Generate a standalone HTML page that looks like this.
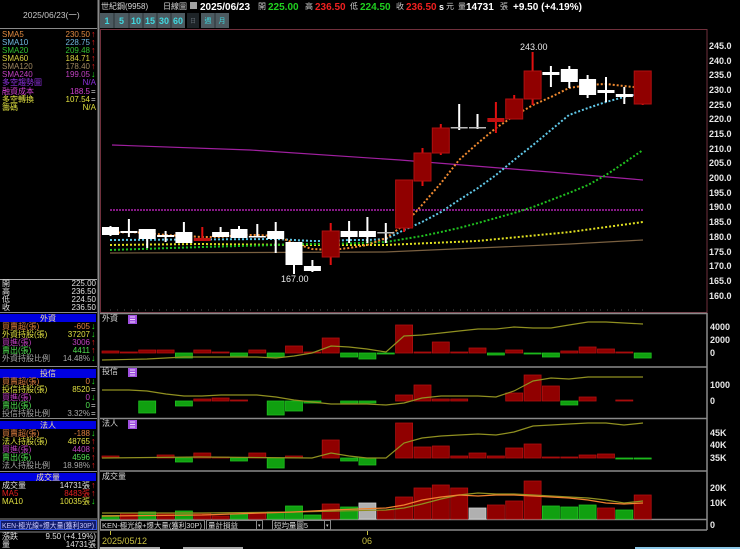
<!DOCTYPE html>
<html><head><meta charset="utf-8"><style>
html,body{margin:0;padding:0;background:#000;width:740px;height:549px;overflow:hidden}
svg{display:block}
text{font-family:"Liberation Sans","Noto Sans CJK TC",sans-serif;font-size:8px}
.b{font-weight:bold}
.ax{fill:#e8e8e8;font-size:9px;font-weight:bold}
.ar{font-size:9px;font-weight:bold}
</style></head><body>
<svg width="740" height="549" viewBox="0 0 740 549" xmlns="http://www.w3.org/2000/svg">
<rect width="740" height="549" fill="#000"/>
<line x1="98.5" y1="0" x2="98.5" y2="549" stroke="#8a8a8a" stroke-width="2"/>
<line x1="0" y1="28.5" x2="97" y2="28.5" stroke="#8a8a8a"/>
<text x="23" y="18" fill="#c8c8c8" style="font-size:8.5px">2025/06/23(一)</text>
<g>
<text x="2" y="37" fill="#e08a40">SMA5</text><text x="90" y="37" fill="#e08a40" text-anchor="end">230.50</text><text x="91" y="37" class="ar" fill="#f02020">↑</text>
<text x="2" y="45" fill="#70b8e0">SMA10</text><text x="90" y="45" fill="#70b8e0" text-anchor="end">228.75</text><text x="91" y="45" class="ar" fill="#f02020">↑</text>
<text x="2" y="53" fill="#30c030">SMA20</text><text x="90" y="53" fill="#30c030" text-anchor="end">209.48</text><text x="91" y="53" class="ar" fill="#f02020">↑</text>
<text x="2" y="61" fill="#d8d040">SMA60</text><text x="90" y="61" fill="#d8d040" text-anchor="end">184.71</text><text x="91" y="61" class="ar" fill="#f02020">↑</text>
<text x="2" y="69" fill="#a08860">SMA120</text><text x="90" y="69" fill="#a08860" text-anchor="end">178.40</text><text x="91" y="69" class="ar" fill="#f02020">↑</text>
<text x="2" y="77" fill="#c040c0">SMA240</text><text x="90" y="77" fill="#c040c0" text-anchor="end">199.05</text><text x="91" y="77" class="ar" fill="#20e020">↓</text>
<text x="2" y="85" fill="#9030e0">多空趨勢圖</text><text x="96" y="85" fill="#9030e0" text-anchor="end">N/A</text>
<text x="2" y="94" fill="#d040d0">融資成本</text><text x="90" y="94" fill="#d040d0" text-anchor="end">188.5</text><text x="91" y="94" fill="#ddd">=</text>
<text x="2" y="102" fill="#e0e040">多空轉換</text><text x="90" y="102" fill="#e0e040" text-anchor="end">107.54</text><text x="91" y="102" fill="#ddd">=</text>
<text x="2" y="110" fill="#e0e040">籌碼</text><text x="96" y="110" fill="#e0e040" text-anchor="end">N/A</text>
</g>
<line x1="0" y1="279.5" x2="97" y2="279.5" stroke="#aaa"/>
<g fill="#e0e0e0">
<text x="2" y="286">開</text><text x="96" y="286" text-anchor="end">225.00</text>
<text x="2" y="294">高</text><text x="96" y="294" text-anchor="end">236.50</text>
<text x="2" y="302">低</text><text x="96" y="302" text-anchor="end">224.50</text>
<text x="2" y="310">收</text><text x="96" y="310" text-anchor="end">236.50</text>
</g>
<line x1="0" y1="312.5" x2="97" y2="312.5" stroke="#8a8a8a"/>
<rect x="0" y="314" width="96" height="8" fill="#0000e0"/><text x="48" y="321" fill="#f0e0a0" text-anchor="middle">外資</text>
<text x="2" y="329" fill="#e08040">買賣超(張)</text><text x="90" y="329" fill="#e08040" text-anchor="end">-605</text><text x="91" y="329" class="ar" fill="#20e020">↓</text>
<text x="2" y="337" fill="#e0e040">外資持股(張)</text><text x="90" y="337" fill="#e0e040" text-anchor="end">37207</text><text x="91" y="337" class="ar" fill="#20e020">↓</text>
<text x="2" y="345" fill="#c040c0">買進(張)</text><text x="90" y="345" fill="#c040c0" text-anchor="end">3006</text><text x="91" y="345" class="ar" fill="#f02020">↑</text>
<text x="2" y="353" fill="#50e050">賣出(張)</text><text x="90" y="353" fill="#50e050" text-anchor="end">4411</text><text x="91" y="353" class="ar" fill="#f02020">↑</text>
<text x="2" y="361" fill="#a8a8a8">外資持股比例</text><text x="90" y="361" fill="#a8a8a8" text-anchor="end">14.48%</text><text x="91" y="361" class="ar" fill="#20e020">↓</text>
<line x1="0" y1="366.5" x2="97" y2="366.5" stroke="#8a8a8a"/>
<rect x="0" y="369" width="96" height="9" fill="#0000e0"/><text x="48" y="376" fill="#f0e0a0" text-anchor="middle">投信</text>
<text x="2" y="384" fill="#e08040">買賣超(張)</text><text x="90" y="384" fill="#e08040" text-anchor="end">0</text><text x="91" y="384" class="ar" fill="#20e020">↓</text>
<text x="2" y="392" fill="#e0e040">投信持股(張)</text><text x="90" y="392" fill="#e0e040" text-anchor="end">8520</text><text x="91" y="392" fill="#ddd">=</text>
<text x="2" y="400" fill="#c040c0">買進(張)</text><text x="90" y="400" fill="#c040c0" text-anchor="end">0</text><text x="91" y="400" class="ar" fill="#20e020">↓</text>
<text x="2" y="408" fill="#50e050">賣出(張)</text><text x="90" y="408" fill="#50e050" text-anchor="end">0</text><text x="91" y="408" fill="#ddd">=</text>
<text x="2" y="416" fill="#a8a8a8">投信持股比例</text><text x="90" y="416" fill="#a8a8a8" text-anchor="end">3.32%</text><text x="91" y="416" fill="#ddd">=</text>
<line x1="0" y1="418.5" x2="97" y2="418.5" stroke="#8a8a8a"/>
<rect x="0" y="421" width="96" height="8" fill="#0000e0"/><text x="48" y="428" fill="#f0e0a0" text-anchor="middle">法人</text>
<text x="2" y="436" fill="#e08040">買賣超(張)</text><text x="90" y="436" fill="#e08040" text-anchor="end">-188</text><text x="91" y="436" class="ar" fill="#20e020">↓</text>
<text x="2" y="444" fill="#e0e040">法人持股(張)</text><text x="90" y="444" fill="#e0e040" text-anchor="end">48765</text><text x="91" y="444" class="ar" fill="#f02020">↑</text>
<text x="2" y="452" fill="#c040c0">買進(張)</text><text x="90" y="452" fill="#c040c0" text-anchor="end">4408</text><text x="91" y="452" class="ar" fill="#f02020">↑</text>
<text x="2" y="460" fill="#50e050">賣出(張)</text><text x="90" y="460" fill="#50e050" text-anchor="end">4596</text><text x="91" y="460" class="ar" fill="#f02020">↑</text>
<text x="2" y="468" fill="#a8a8a8">法人持股比例</text><text x="90" y="468" fill="#a8a8a8" text-anchor="end">18.98%</text><text x="91" y="468" class="ar" fill="#f02020">↑</text>
<line x1="0" y1="471.5" x2="97" y2="471.5" stroke="#8a8a8a"/>
<rect x="0" y="473" width="96" height="8" fill="#0000e0"/><text x="48" y="480" fill="#f0e0a0" text-anchor="middle">成交量</text>
<text x="2" y="488" fill="#e0e0e0">成交量</text><text x="90" y="488" fill="#e0e0e0" text-anchor="end">14731張</text><text x="91" y="488" class="ar" fill="#f02020">↑</text>
<text x="2" y="496" fill="#e02020">MA5</text><text x="90" y="496" fill="#e02020" text-anchor="end">8483張</text><text x="91" y="496" class="ar" fill="#f02020">↑</text>
<text x="2" y="504" fill="#e0e040">MA10</text><text x="90" y="504" fill="#e0e040" text-anchor="end">10035張</text><text x="91" y="504" class="ar" fill="#20e020">↓</text>
<line x1="0" y1="519" x2="97" y2="519" stroke="#8a8a8a"/>
<rect x="0.5" y="520.5" width="96" height="9" fill="#101a6a" stroke="#3050e0"/>
<text x="2" y="528" fill="#c8c8ff" textLength="92" lengthAdjust="spacingAndGlyphs" style="font-size:7.5px">KEN-極光線+爆大量(獲利30P)</text>
<line x1="0" y1="532" x2="97" y2="532" stroke="#8a8a8a"/>
<text x="2" y="539" fill="#e0e0e0">漲跌</text><text x="96" y="539" fill="#e0e0e0" text-anchor="end">9.50 (+4.19%)</text>
<text x="2" y="547" fill="#e0e0e0">量</text><text x="96" y="547" fill="#e0e0e0" text-anchor="end">14731張</text>

<text x="101" y="9" fill="#d8d8d8">世紀鋼(9958)</text>
<text x="163" y="9" fill="#d8d8d8">日線圖</text>
<rect x="190" y="2" width="7" height="7" fill="#a0a0a0"/>
<text x="200" y="10" fill="#fff" class="b" style="font-size:10px">2025/06/23</text>
<text x="258" y="9" fill="#ccc">開</text><text x="268" y="10" fill="#20d020" class="b" style="font-size:10px">225.00</text>
<text x="305" y="9" fill="#ccc">高</text><text x="315" y="10" fill="#f02020" class="b" style="font-size:10px">236.50</text>
<text x="350" y="9" fill="#ccc">低</text><text x="360" y="10" fill="#20d020" class="b" style="font-size:10px">224.50</text>
<text x="396" y="9" fill="#ccc">收</text><text x="406" y="10" fill="#f02020" class="b" style="font-size:10px">236.50</text>
<text x="439" y="10" fill="#fff" class="b" style="font-size:9px">s</text><text x="446" y="9" fill="#ccc">元</text>
<text x="458" y="9" fill="#ccc">量</text><text x="466" y="10" fill="#fff" class="b" style="font-size:10px">14731</text>
<text x="500" y="9" fill="#ccc">張</text>
<text x="513" y="10" fill="#fff" class="b" style="font-size:10px">+9.50 (+4.19%)</text>
<g>
<rect x="100" y="13" width="85" height="15" fill="#4c5a60"/>
<g stroke="#2a3236"><line x1="114" y1="13" x2="114" y2="28"/><line x1="129" y1="13" x2="129" y2="28"/><line x1="143" y1="13" x2="143" y2="28"/><line x1="157" y1="13" x2="157" y2="28"/><line x1="171" y1="13" x2="171" y2="28"/></g>
<rect x="187" y="13" width="12" height="15" fill="#1e2428"/>
<rect x="201" y="13" width="28" height="15" fill="#4c5a60"/><line x1="215" y1="13" x2="215" y2="28" stroke="#2a3236"/>
<g fill="#40d8e0" class="b" text-anchor="middle">
<text x="107" y="24" style="font-size:9px">1</text><text x="121.5" y="24" style="font-size:9px">5</text><text x="136" y="24" style="font-size:9px">10</text><text x="150" y="24" style="font-size:9px">15</text><text x="164" y="24" style="font-size:9px">30</text><text x="178" y="24" style="font-size:9px">60</text>
</g>
<text x="193" y="23" fill="#606870" text-anchor="middle" style="font-size:6px">日</text>
<text x="208" y="23" fill="#40d8e0" text-anchor="middle" style="font-size:7px">週</text>
<text x="222" y="23" fill="#40d8e0" text-anchor="middle" style="font-size:7px">月</text>
</g>

<rect x="100.5" y="29.5" width="606.5" height="283" fill="none" stroke="#70303c"/>
<g class="ax">
<text x="709" y="49" class="ax">245.0</text><text x="709" y="64" class="ax">240.0</text><text x="709" y="78" class="ax">235.0</text><text x="709" y="93" class="ax">230.0</text><text x="709" y="108" class="ax">225.0</text><text x="709" y="122" class="ax">220.0</text><text x="709" y="137" class="ax">215.0</text><text x="709" y="152" class="ax">210.0</text><text x="709" y="166" class="ax">205.0</text><text x="709" y="181" class="ax">200.0</text><text x="709" y="196" class="ax">195.0</text><text x="709" y="210" class="ax">190.0</text><text x="709" y="225" class="ax">185.0</text><text x="709" y="240" class="ax">180.0</text><text x="709" y="255" class="ax">175.0</text><text x="709" y="269" class="ax">170.0</text><text x="709" y="284" class="ax">165.0</text><text x="709" y="299" class="ax">160.0</text>
</g>
<line x1="110" y1="210" x2="643" y2="210" stroke="#b020b0" stroke-width="1.5" stroke-dasharray="2,1"/>
<polyline fill="none" stroke="#a020a0" stroke-width="1.2" points="112,145 250,150 400,160 550,172 643,180"/>
<polyline fill="none" stroke="#7a6040" stroke-width="1.2" points="110,253 385,252 477,248 570,244 643,240"/>
<polyline fill="none" stroke="#e0e020" stroke-width="2" stroke-dasharray="2,2" points="110,245 200,244 300,245 385,245 477,241 570,232 643,222"/>
<polyline fill="none" stroke="#20c020" stroke-width="2" stroke-dasharray="2,2" points="110,250 202,247 276,245 294,244 331,244 386,242 404,239 422,236 441,232 459,228 478,223 496,218 514,213 533,207 551,200 569,193 588,185 606,175 624,163 643,150"/>
<polyline fill="none" stroke="#60c8e8" stroke-width="2" stroke-dasharray="2,2" points="110,240 276,239 294,240 312,241 331,241 349,240 367,240 386,239 404,230 422,222 441,212 459,200 478,188 496,175 514,160 533,145 551,130 569,115 588,108 606,102 624,97 643,93"/>
<polyline fill="none" stroke="#f08a30" stroke-width="2" stroke-dasharray="2,2" points="110,233 129,232 147,233 166,235 184,236 202,237 221,237 239,235 257,235 276,236 294,243 312,249 331,250 349,248 367,245 386,238 404,225 422,205 441,183 459,160 478,143 496,128 514,116 533,105 551,97 569,88 588,85 606,84 624,86 643,88"/>
<g fill="#fff" stroke="#fff">
<line x1="110.5" y1="226" x2="110.5" y2="236" stroke-width="2"/><rect x="102" y="227" width="17" height="8" stroke="none"/>
<line x1="128.9" y1="219" x2="128.9" y2="237" stroke-width="2"/><rect x="120.4" y="231" width="17" height="2" stroke="none"/>
<line x1="147.2" y1="229" x2="147.2" y2="248" stroke-width="2"/><rect x="138.7" y="229" width="17" height="10" stroke="none"/>
<line x1="165.6" y1="231" x2="165.6" y2="242" stroke-width="2"/><rect x="157.1" y="235" width="17" height="2" stroke="none"/>
<line x1="183.9" y1="222" x2="183.9" y2="243" stroke-width="2"/><rect x="175.4" y="232" width="17" height="11" stroke="none"/>
<line x1="220.6" y1="227" x2="220.6" y2="237" stroke-width="2"/><rect x="212.1" y="232" width="17" height="5" stroke="none"/>
<line x1="239" y1="226" x2="239" y2="238" stroke-width="2"/><rect x="230.5" y="229" width="17" height="9" stroke="none"/>
<line x1="257.3" y1="224" x2="257.3" y2="237" stroke-width="2"/><rect x="248.8" y="236" width="17" height="1.5" stroke="none"/>
<line x1="275.7" y1="222" x2="275.7" y2="253" stroke-width="2"/><rect x="267.2" y="231" width="17" height="8" stroke="none"/>
<line x1="294" y1="242" x2="294" y2="274" stroke-width="2"/><rect x="285.5" y="242" width="17" height="23" stroke="none"/>
<line x1="312.4" y1="260" x2="312.4" y2="272" stroke-width="2"/><rect x="303.9" y="266" width="17" height="5" stroke="none"/>
<line x1="349.1" y1="221" x2="349.1" y2="243" stroke-width="2"/><rect x="340.6" y="231" width="17" height="6" stroke="none"/>
<line x1="367.4" y1="217" x2="367.4" y2="243" stroke-width="2"/><rect x="358.9" y="231" width="17" height="6" stroke="none"/>
<line x1="385.8" y1="223" x2="385.8" y2="243" stroke-width="2"/><rect x="377.3" y="232" width="17" height="1.5" stroke="none" fill="#bbb"/>
<line x1="459.2" y1="104" x2="459.2" y2="130" stroke-width="2"/><rect x="450.7" y="127" width="17" height="1.5" stroke="none" fill="#bbb"/>
<line x1="477.5" y1="114" x2="477.5" y2="129" stroke-width="2"/><rect x="469" y="127" width="17" height="1.5" stroke="none" fill="#bbb"/>
<line x1="550.9" y1="66" x2="550.9" y2="87" stroke-width="2"/><rect x="542.4" y="72" width="17" height="3" stroke="none"/>
<line x1="569.3" y1="66" x2="569.3" y2="88" stroke-width="2"/><rect x="560.8" y="69" width="17" height="13" stroke="none"/>
<line x1="587.6" y1="75" x2="587.6" y2="98" stroke-width="2"/><rect x="579.1" y="79" width="17" height="16" stroke="none"/>
<line x1="606" y1="77" x2="606" y2="102" stroke-width="2"/><rect x="597.5" y="90" width="17" height="3" stroke="none"/>
<line x1="624.3" y1="87" x2="624.3" y2="104" stroke-width="2"/><rect x="615.8" y="94" width="17" height="3" stroke="none"/>
</g>
<g>
<line x1="202.3" y1="227" x2="202.3" y2="241" stroke="#e01010" stroke-width="2"/><rect x="193.8" y="238" width="17" height="3" fill="#c01010"/>
<line x1="330.7" y1="223" x2="330.7" y2="265" stroke="#e01010" stroke-width="2"/><rect x="322.2" y="231" width="17" height="26" fill="#900000" stroke="#b01010"/>
<line x1="404.1" y1="180" x2="404.1" y2="232" stroke="#e01010" stroke-width="2"/><rect x="395.6" y="180" width="17" height="48" fill="#900000" stroke="#b01010"/>
<line x1="422.5" y1="148" x2="422.5" y2="186" stroke="#e01010" stroke-width="2"/><rect x="414" y="153" width="17" height="28" fill="#900000" stroke="#b01010"/>
<line x1="440.8" y1="124" x2="440.8" y2="155" stroke="#e01010" stroke-width="2"/><rect x="432.3" y="128" width="17" height="25" fill="#900000" stroke="#b01010"/>
<line x1="495.9" y1="102" x2="495.9" y2="133" stroke="#e01010" stroke-width="2"/><rect x="487.4" y="118" width="17" height="4" fill="#c01010"/>
<line x1="514.2" y1="95" x2="514.2" y2="119" stroke="#e01010" stroke-width="2"/><rect x="505.7" y="99" width="17" height="20" fill="#900000" stroke="#b01010"/>
<line x1="532.6" y1="52" x2="532.6" y2="105" stroke="#e01010" stroke-width="2"/><rect x="524.1" y="71" width="17" height="28" fill="#900000" stroke="#b01010"/>
<line x1="642.7" y1="71" x2="642.7" y2="105" stroke="#e01010" stroke-width="2"/><rect x="634.2" y="71" width="17" height="33" fill="#900000" stroke="#b01010"/>
</g>
<text x="520" y="50" fill="#e8e8e8" style="font-size:9px">243.00</text>
<text x="281" y="282" fill="#e8e8e8" style="font-size:9px">167.00</text>
<line x1="110" y1="310" x2="643" y2="310" stroke="#555" stroke-dasharray="1,6"/>

<g stroke="#8a8a8a" stroke-width="1.5" fill="none">
<line x1="100" y1="313.5" x2="707" y2="313.5"/>
<line x1="100" y1="367" x2="707" y2="367"/>
<line x1="100" y1="418.5" x2="707" y2="418.5"/>
<line x1="100" y1="471" x2="707" y2="471"/>
<line x1="100" y1="519.5" x2="707" y2="519.5"/>
<line x1="100" y1="530" x2="707" y2="530"/>
<line x1="707" y1="313" x2="707" y2="530"/>
</g>
<g fill="#d8d8d8">
<text x="102" y="321">外資</text><text x="102" y="374">投信</text><text x="102" y="426">法人</text><text x="102" y="479">成交量</text>
</g>
<g>
<rect x="128" y="315" width="9" height="9" fill="#a050e0"/><path d="M130 317h5M130 319.5h5M130 322h5" stroke="#fff" stroke-width="0.8"/>
<rect x="128" y="368" width="9" height="9" fill="#a050e0"/><path d="M130 370h5M130 372.5h5M130 375h5" stroke="#fff" stroke-width="0.8"/>
<rect x="128" y="420" width="9" height="9" fill="#a050e0"/><path d="M130 422h5M130 424.5h5M130 427h5" stroke="#fff" stroke-width="0.8"/>
</g>
<g class="ax">
<text x="710" y="330" class="ax">4000</text><text x="710" y="343" class="ax">2000</text><text x="710" y="356" class="ax">0</text>
<text x="710" y="388" class="ax">1000</text><text x="710" y="404" class="ax">0</text>
<text x="710" y="436" class="ax">45K</text><text x="710" y="448" class="ax">40K</text><text x="710" y="461" class="ax">35K</text>
<text x="710" y="491" class="ax">20K</text><text x="710" y="506" class="ax">10K</text>
<text x="710" y="528" class="ax">0</text>
</g>

<g fill="#900000" stroke="#b01010" stroke-width="0.8">
<rect x="102" y="351" width="17" height="2"/><rect x="120.4" y="352" width="17" height="1"/><rect x="138.7" y="350" width="17" height="3"/><rect x="157.1" y="350" width="17" height="3"/><rect x="193.8" y="350" width="17" height="3"/><rect x="212.1" y="352" width="17" height="1"/><rect x="248.8" y="350" width="17" height="3"/><rect x="285.5" y="346" width="17" height="7"/><rect x="303.9" y="352" width="17" height="1"/><rect x="322.2" y="338" width="17" height="15"/><rect x="395.6" y="325" width="17" height="28"/><rect x="414" y="352" width="17" height="1"/><rect x="432.3" y="342" width="17" height="11"/><rect x="450.7" y="352" width="17" height="1"/><rect x="469" y="348" width="17" height="5"/><rect x="505.7" y="350" width="17" height="3"/><rect x="560.8" y="351" width="17" height="2"/><rect x="579.1" y="347" width="17" height="6"/><rect x="597.5" y="349" width="17" height="4"/><rect x="615.8" y="352" width="17" height="1"/>
</g>
<g fill="#10a010" stroke="#20c020" stroke-width="0.8">
<rect x="175.4" y="353" width="17" height="5"/><rect x="230.5" y="353" width="17" height="3"/><rect x="267.2" y="353" width="17" height="4"/><rect x="340.6" y="353" width="17" height="4"/><rect x="358.9" y="353" width="17" height="6"/><rect x="377.3" y="353" width="17" height="1"/><rect x="487.4" y="353" width="17" height="2"/><rect x="524.1" y="353" width="17" height="1"/><rect x="542.4" y="353" width="17" height="4"/><rect x="634.2" y="353" width="17" height="5"/>
</g>
<polyline fill="none" stroke="#909020" stroke-width="1.2" points="102,360 147,359 184,357 221,357 257,357 276,358 294,356 312,353 331,346 349,347 367,349 386,352 404,336 422,335 441,333 459,331 478,329 496,329 514,327 533,328 551,328 569,325 588,322 606,322 624,323 643,324"/>
<g fill="#900000" stroke="#b01010" stroke-width="0.8">
<rect x="193.8" y="399" width="17" height="2"/><rect x="212.1" y="398" width="17" height="3"/><rect x="230.5" y="400" width="17" height="1"/><rect x="395.6" y="395" width="17" height="6"/><rect x="414" y="385" width="17" height="16"/><rect x="432.3" y="399" width="17" height="2"/><rect x="450.7" y="399" width="17" height="2"/><rect x="505.7" y="393" width="17" height="8"/><rect x="524.1" y="375" width="17" height="26"/><rect x="542.4" y="386" width="17" height="15"/><rect x="579.1" y="397" width="17" height="4"/><rect x="615.8" y="400" width="17" height="1"/>
</g>
<g fill="#10a010" stroke="#20c020" stroke-width="0.8">
<rect x="138.7" y="401" width="17" height="12"/><rect x="175.4" y="401" width="17" height="5"/><rect x="267.2" y="401" width="17" height="14"/><rect x="285.5" y="401" width="17" height="10"/><rect x="303.9" y="401" width="17" height="2"/><rect x="340.6" y="401" width="17" height="2"/><rect x="358.9" y="401" width="17" height="2"/><rect x="560.8" y="401" width="17" height="4"/>
</g>
<polyline fill="none" stroke="#909020" stroke-width="1.2" points="102,390 129,390 147,391 166,394 184,396 202,396 221,395 257,395 276,397 294,400 312,402 331,404 367,404 386,405 404,403 422,398 441,396 478,396 496,397 514,391 533,381 551,378 569,379 588,377 643,377"/>
<g fill="#900000" stroke="#b01010" stroke-width="0.8">
<rect x="102" y="456" width="17" height="2"/><rect x="157.1" y="455" width="17" height="3"/><rect x="193.8" y="453" width="17" height="5"/><rect x="212.1" y="457" width="17" height="1"/><rect x="248.8" y="453" width="17" height="5"/><rect x="285.5" y="456" width="17" height="2"/><rect x="322.2" y="440" width="17" height="18"/><rect x="395.6" y="423" width="17" height="35"/><rect x="414" y="447" width="17" height="11"/><rect x="432.3" y="446" width="17" height="12"/><rect x="450.7" y="456" width="17" height="2"/><rect x="469" y="453" width="17" height="5"/><rect x="487.4" y="456" width="17" height="2"/><rect x="505.7" y="448" width="17" height="10"/><rect x="524.1" y="444" width="17" height="14"/><rect x="542.4" y="457" width="17" height="1"/><rect x="560.8" y="457" width="17" height="1"/><rect x="579.1" y="455" width="17" height="3"/><rect x="597.5" y="454" width="17" height="4"/>
</g>
<g fill="#10a010" stroke="#20c020" stroke-width="0.8">
<rect x="175.4" y="458" width="17" height="4"/><rect x="230.5" y="458" width="17" height="3"/><rect x="267.2" y="458" width="17" height="10"/><rect x="340.6" y="458" width="17" height="3"/><rect x="358.9" y="458" width="17" height="7"/><rect x="615.8" y="458" width="17" height="1"/><rect x="634.2" y="458" width="17" height="1"/>
</g>
<polyline fill="none" stroke="#909020" stroke-width="1.2" points="102,458 200,457 312,458 331,453 349,456 367,458 386,458 404,443 422,438 441,436 459,435 478,434 496,435 514,432 533,426 551,425 569,424 588,423 606,423 624,425 643,423"/>
<g fill="#900000" stroke="#b01010" stroke-width="0.8">
<rect x="120.4" y="513" width="17" height="6"/><rect x="157.1" y="513" width="17" height="6"/><rect x="193.8" y="513" width="17" height="6"/><rect x="212.1" y="516" width="17" height="3"/><rect x="248.8" y="513" width="17" height="6"/><rect x="322.2" y="504" width="17" height="15"/><rect x="377.3" y="510" width="17" height="9"/><rect x="395.6" y="497" width="17" height="22"/><rect x="414" y="488" width="17" height="31"/><rect x="432.3" y="485" width="17" height="34"/><rect x="450.7" y="488" width="17" height="31"/><rect x="487.4" y="505" width="17" height="14"/><rect x="505.7" y="501" width="17" height="18"/><rect x="524.1" y="481" width="17" height="38"/><rect x="597.5" y="508" width="17" height="11"/><rect x="634.2" y="495" width="17" height="24"/>
</g>
<g fill="#10a010" stroke="#20c020" stroke-width="0.8">
<rect x="102" y="515.5" width="17" height="3.5"/><rect x="138.7" y="512" width="17" height="7"/><rect x="175.4" y="511" width="17" height="8"/><rect x="230.5" y="514" width="17" height="5"/><rect x="267.2" y="512" width="17" height="7"/><rect x="285.5" y="506" width="17" height="13"/><rect x="303.9" y="515" width="17" height="4"/><rect x="340.6" y="507" width="17" height="12"/><rect x="542.4" y="506" width="17" height="13"/><rect x="560.8" y="507" width="17" height="12"/><rect x="579.1" y="505" width="17" height="14"/><rect x="615.8" y="510" width="17" height="9"/>
</g>
<g fill="#b0b0b0" stroke="#d0d0d0" stroke-width="0.8">
<rect x="358.9" y="503" width="17" height="16"/><rect x="469" y="508" width="17" height="11"/>
</g>
<polyline fill="none" stroke="#909020" stroke-width="1.2" points="102,513 202,513 294,512 386,510 404,508 422,504 441,499 459,495 478,493 496,494 514,494 533,495 551,496 569,497 588,498 606,500 624,503 643,501"/>
<polyline fill="none" stroke="#f08030" stroke-width="1.2" points="102,516 202,515 294,512 331,510 386,508 404,505 422,500 441,497 459,495 478,496 496,495 514,495 533,496 551,497 569,498 588,500 606,503 624,504 643,503"/>

<rect x="100.5" y="520.5" width="104" height="9" fill="#000" stroke="#888"/>
<text x="102" y="528" fill="#d8d8d8" textLength="100" lengthAdjust="spacingAndGlyphs" style="font-size:7.5px">KEN-極光線+爆大量(獲利30P)</text>
<rect x="206.5" y="520.5" width="56" height="9" fill="#000" stroke="#888"/>
<text x="208" y="528" fill="#d8d8d8" textLength="30" lengthAdjust="spacingAndGlyphs" style="font-size:7.5px">量計損益</text>
<rect x="256.5" y="520.5" width="6" height="9" fill="#000" stroke="#888"/><text x="258" y="527" fill="#ccc" style="font-size:5px">▾</text>
<rect x="272.5" y="520.5" width="58" height="9" fill="#000" stroke="#888"/>
<text x="274" y="528" fill="#d8d8d8" textLength="34" lengthAdjust="spacingAndGlyphs" style="font-size:7.5px">短均量圖5</text>
<rect x="324.5" y="520.5" width="6" height="9" fill="#000" stroke="#888"/><text x="326" y="527" fill="#ccc" style="font-size:5px">▾</text>
<line x1="110.5" y1="531" x2="110.5" y2="535" stroke="#c8c040"/>
<text x="102" y="544" fill="#c8c040" style="font-size:9px">2025/05/12</text>
<line x1="367.5" y1="531" x2="367.5" y2="535" stroke="#c8c040"/>
<text x="362" y="544" fill="#c8c040" style="font-size:9px">06</text>
<rect x="100" y="547" width="60" height="2" fill="#aaa"/>
<rect x="183" y="547" width="60" height="2" fill="#aaa"/>
<rect x="635" y="547" width="105" height="2" fill="#8cc8e8"/>
</svg>
</body></html>
